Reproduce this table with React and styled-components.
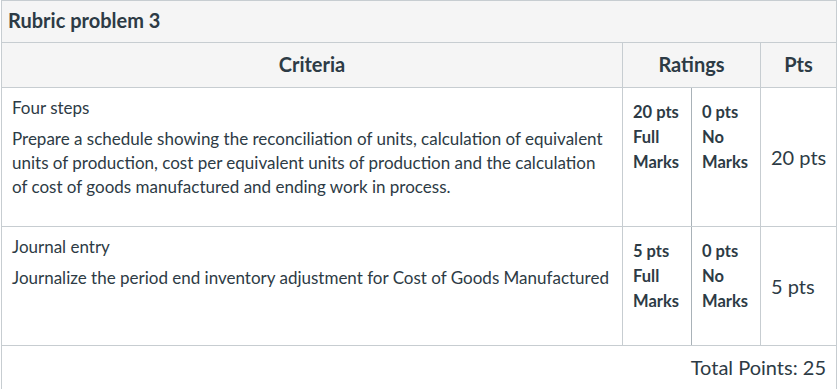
import React from 'react';
import styled, { createGlobalStyle } from 'styled-components';

const rubric = {
  title: 'Rubric problem 3',
  criteria: [
    {
      name: 'Four steps',
      description:
        'Prepare a schedule showing the reconciliation of units, calculation of equivalent units of production, cost per equivalent units of production and the calculation of cost of goods manufactured and ending work in process.',
      ratings: [
        { points: '20 pts', label: 'Full Marks' },
        { points: '0 pts', label: 'No Marks' },
      ],
      points: '20 pts',
    },
    {
      name: 'Journal entry',
      description:
        'Journalize the period end inventory adjustment for Cost of Goods Manufactured',
      ratings: [
        { points: '5 pts', label: 'Full Marks' },
        { points: '0 pts', label: 'No Marks' },
      ],
      points: '5 pts',
    },
  ],
  total: 25,
};

const App = () => {
  return (
    <>
      <GlobalStyle />
      <Page>
        <Rubric>
          <TitleBar>{rubric.title}</TitleBar>
          <Row>
            <HeadCell>Criteria</HeadCell>
            <HeadCell>Ratings</HeadCell>
            <HeadCell $last>Pts</HeadCell>
          </Row>
          {rubric.criteria.map((item) => (
            <Row key={item.name}>
              <CriteriaCell>
                <CriteriaName>{item.name}</CriteriaName>
                <CriteriaDesc>{item.description}</CriteriaDesc>
              </CriteriaCell>
              <RatingsCell>
                {item.ratings.map((r, i) => (
                  <RatingTier key={i} $last={i === item.ratings.length - 1}>
                    <div>{r.points}</div>
                    <div>{r.label}</div>
                  </RatingTier>
                ))}
              </RatingsCell>
              <PointsCell>{item.points}</PointsCell>
            </Row>
          ))}
          <TotalRow>Total Points: {rubric.total}</TotalRow>
        </Rubric>
      </Page>
    </>
  );
};

export default App;

const GlobalStyle = createGlobalStyle`
  html, body {
    margin: 0;
    padding: 0;
    background: #ffffff;
  }
  body {
    font-family: 'Lato', 'Noto Sans', sans-serif;
    color: #2d3b45;
  }
`;

const Page = styled.div`
  padding-left: 1px;
`;

const Rubric = styled.div`
  width: 836px;
  box-sizing: border-box;
  border: 1px solid #c7cdd1;
  border-bottom: none;
`;

const TitleBar = styled.div`
  height: 42px;
  box-sizing: border-box;
  display: flex;
  align-items: center;
  padding: 0 6px 3px;
  background: #f5f5f5;
  border-bottom: 1px solid #c7cdd1;
  font-size: 20px;
  font-weight: bold;
`;

const Row = styled.div`
  display: grid;
  grid-template-columns: 621px 138px 1fr;
  border-bottom: 1px solid #c7cdd1;
`;

const HeadCell = styled.div`
  height: 44px;
  box-sizing: border-box;
  display: flex;
  align-items: center;
  justify-content: center;
  padding-bottom: 3px;
  background: #f5f5f5;
  border-right: ${(props) => (props.$last ? 'none' : '1px solid #c7cdd1')};
  font-size: 20px;
  font-weight: bold;
`;

const CriteriaCell = styled.div`
  padding: 8px 10px 27px 10px;
  border-right: 1px solid #c7cdd1;
  font-size: 17px;
  line-height: 24px;
`;

const CriteriaName = styled.div``;

const CriteriaDesc = styled.div`
  margin-top: 7px;
`;

const RatingsCell = styled.div`
  display: flex;
  border-right: 1px solid #c7cdd1;
`;

const RatingTier = styled.div`
  flex: 1;
  padding: 12px 4px 31px 10px;
  border-right: ${(props) => (props.$last ? 'none' : '1px solid #a9b2b8')};
  font-size: 16.5px;
  font-weight: bold;
  line-height: 25px;
`;

const PointsCell = styled.div`
  display: flex;
  align-items: center;
  padding: 0 0 1px 10px;
  font-size: 20px;
`;

const TotalRow = styled.div`
  padding: 9px 10px 12px;
  text-align: right;
  font-size: 20px;
`;
